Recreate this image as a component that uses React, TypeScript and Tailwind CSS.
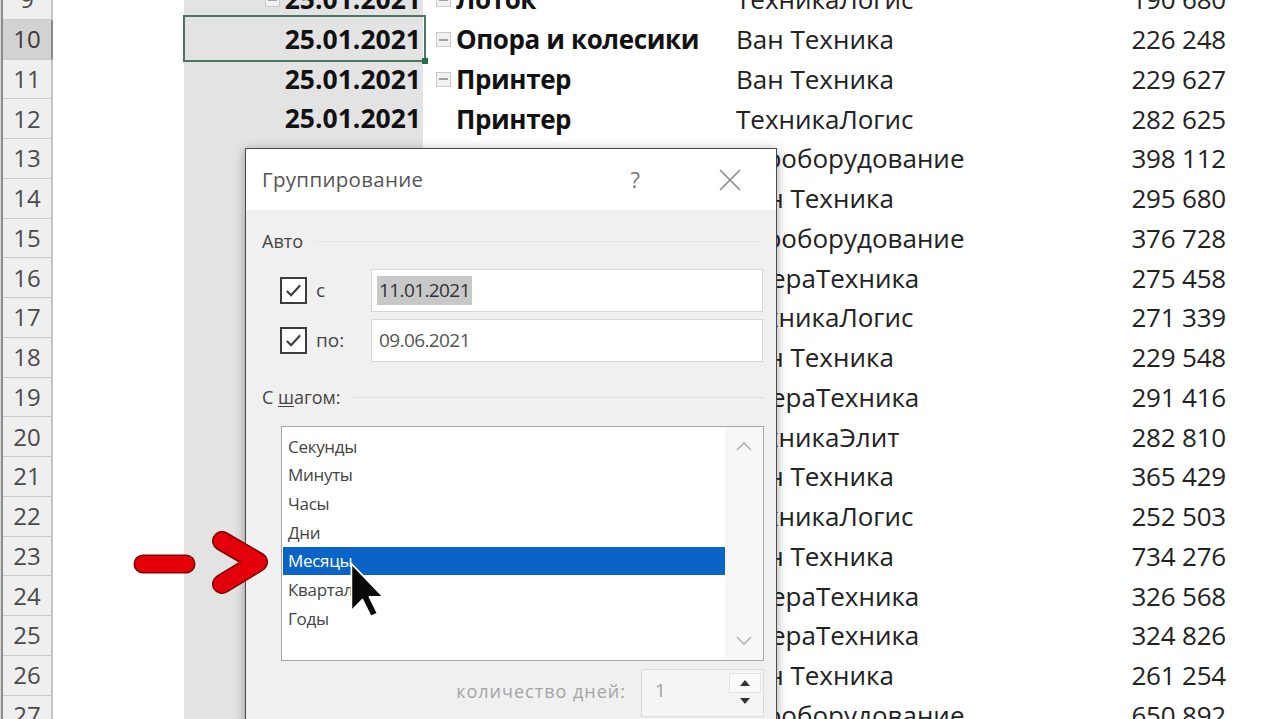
import React from 'react';

type Row = {
  n: number;
  date: string;
  dateToggle?: boolean;
  product: string;
  productToggle?: boolean;
  supplier: string;
  amount: string;
};

const rows: Row[] = [
  { n: 9, date: '25.01.2021', dateToggle: true, product: 'Лоток', productToggle: true, supplier: 'ТехникаЛогис', amount: '190 680' },
  { n: 10, date: '25.01.2021', product: 'Опора и колесики', productToggle: true, supplier: 'Ван Техника', amount: '226 248' },
  { n: 11, date: '25.01.2021', product: 'Принтер', productToggle: true, supplier: 'Ван Техника', amount: '229 627' },
  { n: 12, date: '25.01.2021', product: 'Принтер', supplier: 'ТехникаЛогис', amount: '282 625' },
  { n: 13, date: '26.01.2021', product: 'Принтер', productToggle: true, supplier: 'Евроборудование', amount: '398 112' },
  { n: 14, date: '26.01.2021', product: 'Принтер', supplier: 'Ван Техника', amount: '295 680' },
  { n: 15, date: '28.01.2021', product: 'Сканер', productToggle: true, supplier: 'Евроборудование', amount: '376 728' },
  { n: 16, date: '29.01.2021', product: 'Монитор', productToggle: true, supplier: 'СфераТехника', amount: '275 458' },
  { n: 17, date: '01.02.2021', product: 'Монитор', supplier: 'ТехникаЛогис', amount: '271 339' },
  { n: 18, date: '02.02.2021', product: 'Лоток', productToggle: true, supplier: 'Ван Техника', amount: '229 548' },
  { n: 19, date: '03.02.2021', product: 'Принтер', productToggle: true, supplier: 'СфераТехника', amount: '291 416' },
  { n: 20, date: '04.02.2021', product: 'Сканер', productToggle: true, supplier: 'ТехникаЭлит', amount: '282 810' },
  { n: 21, date: '05.02.2021', product: 'Монитор', productToggle: true, supplier: 'Ван Техника', amount: '365 429' },
  { n: 22, date: '08.02.2021', product: 'Принтер', productToggle: true, supplier: 'ТехникаЛогис', amount: '252 503' },
  { n: 23, date: '09.02.2021', product: 'Сканер', productToggle: true, supplier: 'Ван Техника', amount: '734 276' },
  { n: 24, date: '10.02.2021', product: 'Лоток', productToggle: true, supplier: 'СфераТехника', amount: '326 568' },
  { n: 25, date: '11.02.2021', product: 'Монитор', productToggle: true, supplier: 'СфераТехника', amount: '324 826' },
  { n: 26, date: '12.02.2021', product: 'Принтер', productToggle: true, supplier: 'Ван Техника', amount: '261 254' },
  { n: 27, date: '15.02.2021', product: 'Сканер', productToggle: true, supplier: 'Евроборудование', amount: '650 892' },
];

const units = ['Секунды', 'Минуты', 'Часы', 'Дни', 'Месяцы', 'Кварталы', 'Годы'];

const Toggle = () => (
  <span className="mr-[5px] inline-flex h-[15px] w-[15px] shrink-0 items-center justify-center border border-[#c9c9c9] bg-[#f1f1f1]">
    <span className="h-[2px] w-[9px] bg-[#a0a0a0]" />
  </span>
);

const SheetRow = ({ row }: { row: Row }) => {
  const active = row.n === 10;
  return (
    <div className="flex h-[39.75px] items-stretch">
      <div className="w-[3px] bg-[#d9d9d9] border-r-2 border-[#8c8c8c]" />
      <div
        className={`flex w-[50px] items-center justify-center border-b border-r-2 border-b-[#cacaca] text-[24px] ${
          active ? 'bg-[#d2d2d2] border-r-[#8a8a8a] text-[#3a3a3a]' : 'bg-[#efefef] border-r-[#c4c4c4] text-[#4a4a4a]'
        }`}
      >
        {row.n}
      </div>
      <div className="w-[131px] bg-white" />
      <div className="relative flex w-[239px] items-center justify-end bg-[#e3e3e3] pr-[2px] text-[26.5px] font-bold text-[#111]">
        {row.dateToggle && <Toggle />}
        {row.date}
        {active && (
          <span className="absolute left-[-1px] right-[-3px] top-[-5px] bottom-[-2px] z-10 border-2 border-[#4f7462]">
            <span className="absolute right-[-4px] bottom-[-4px] h-[6px] w-[6px] bg-[#21704a]" />
          </span>
        )}
      </div>
      <div className="flex w-[313px] items-center pl-[13px] text-[26px] font-bold tracking-[-0.4px] text-[#111]">
        {row.productToggle ? <Toggle /> : <span className="w-[20px]" />}
        {row.product}
      </div>
      <div className="flex w-[360px] items-center text-[26px] text-[#222]">{row.supplier}</div>
      <div className="flex w-[130px] items-center justify-end text-[26px] text-[#222] tracking-[-0.2px]">{row.amount}</div>
      <div className="flex-1" />
    </div>
  );
};

const Checkbox = () => (
  <span className="flex h-[27px] w-[27px] items-center justify-center border-2 border-[#3c3c3c] bg-white">
    <svg viewBox="0 0 20 20" className="h-[19px] w-[19px]">
      <path d="M3 10.5 L7.5 15 L17 4.5" fill="none" stroke="#3c3c3c" strokeWidth="2.2" />
    </svg>
  </span>
);

const DateField = ({ label, value, selected }: { label: string; value: string; selected?: boolean }) => (
  <div className="mt-[7px] flex h-[43px] items-center first:mt-[18px]">
    <div className="ml-[34px] flex w-[91px] items-center">
      <Checkbox />
      <span className="ml-[9px] text-[19px] text-[#444]">{label}</span>
    </div>
    <div className="flex h-full w-[392px] items-center border border-[#d6d6d6] bg-white pl-[5px] text-[19px] tracking-[-0.6px]">
      <span className={selected ? 'bg-[#c8c8c8] px-[2px] text-[#333]' : 'px-[2px] text-[#555]'}>{value}</span>
    </div>
  </div>
);

const GroupingDialog = () => (
  <div className="absolute left-[245px] top-[148px] z-20 h-[620px] w-[532px] border border-[#4a4a4a] bg-[#f0f0f0] shadow-[0_2px_10px_rgba(0,0,0,0.35)] font-['Open_Sans',sans-serif]">
    <div className="flex h-[61px] items-center bg-white pl-[16px]">
      <span className="text-[20.5px] tracking-[0.3px] text-[#555]">Группирование</span>
      <span className="ml-auto text-[22px] text-[#777]">?</span>
      <svg viewBox="0 0 24 24" className="ml-[78px] mr-[34px] h-[24px] w-[24px]">
        <path d="M2 2 L22 22 M22 2 L2 22" stroke="#8a8a8a" strokeWidth="1.6" />
      </svg>
    </div>

    <div className="mt-[21px] flex h-[20px] items-center pl-[16px] pr-[12px]">
      <span className="text-[18px] text-[#444]">Авто</span>
      <span className="ml-[12px] h-px flex-1 bg-[#e6e6e6]" />
    </div>

    <div className="flex flex-col">
      <DateField label="с" value="11.01.2021" selected />
      <DateField label="по:" value="09.06.2021" />
    </div>

    <div className="mt-[25px] flex h-[20px] items-center pl-[16px] pr-[12px]">
      <span className="text-[18px] text-[#444]">
        С <span className="underline underline-offset-2">ш</span>агом:
      </span>
      <span className="ml-[12px] h-px flex-1 bg-[#dedede]" />
    </div>

    <div className="ml-[35px] mt-[19px] flex h-[235px] w-[483px] border border-[#a6a6a6] bg-white">
      <ul className="flex-1 pl-px pt-[5px]">
        {units.map((u) => (
          <li
            key={u}
            className={`flex h-[28.7px] items-center pl-[5px] text-[17px] tracking-[-0.3px] ${
              u === 'Месяцы' ? 'bg-[#0a64c8] text-white' : 'text-[#444]'
            }`}
          >
            {u}
          </li>
        ))}
      </ul>
      <div className="flex w-[38px] flex-col items-center justify-between bg-[#f7f7f7] py-[14px]">
        <svg viewBox="0 0 16 10" className="h-[10px] w-[16px]">
          <path d="M1 9 L8 2 L15 9" fill="none" stroke="#b4b4b4" strokeWidth="1.6" />
        </svg>
        <svg viewBox="0 0 16 10" className="h-[10px] w-[16px]">
          <path d="M1 1 L8 8 L15 1" fill="none" stroke="#b4b4b4" strokeWidth="1.6" />
        </svg>
      </div>
    </div>

    <div className="mt-[8px] flex items-start justify-end pr-[12px]">
      <span className="mr-[15px] mt-[9px] text-[18px] tracking-[1px] text-[#a4a4a4]">количество дней:</span>
      <div className="flex h-[48px] w-[123px] border border-[#dadada] bg-[#f5f5f5]">
        <span className="flex-1 pl-[13px] pt-[6px] text-[19px] text-[#a0a0a0]">1</span>
        <div className="flex w-[36px] flex-col items-center">
          <span className="mt-[3px] flex h-[20px] w-[32px] items-center justify-center border border-[#e2e2e2] bg-[#fafafa]">
            <svg viewBox="0 0 10 6" className="h-[6px] w-[10px]">
              <path d="M0 6 L5 0 L10 6 Z" fill="#333" />
            </svg>
          </span>
          <span className="flex h-[16px] w-[32px] items-center justify-center">
            <svg viewBox="0 0 10 6" className="h-[6px] w-[10px]">
              <path d="M0 0 L5 6 L10 0 Z" fill="#333" />
            </svg>
          </span>
        </div>
      </div>
    </div>
  </div>
);

const PointerArrow = () => (
  <svg className="absolute left-[128px] top-[525px] z-30 h-[76px] w-[148px]" viewBox="128 525 148 76">
    <g fill="none" strokeLinecap="round" strokeLinejoin="round">
      <path d="M143 564 L186 564" stroke="#7a0000" strokeWidth="19" />
      <path d="M143 564 L186 564" stroke="#e4000a" strokeWidth="16" />
      <path d="M222 541 L258 562 L222 584" stroke="#7a0000" strokeWidth="20" />
      <path d="M222 541 L258 562 L222 584" stroke="#e4000a" strokeWidth="17" />
    </g>
  </svg>
);

const MouseCursor = () => (
  <svg className="absolute left-[350px] top-[562px] z-30 h-[56px] w-[36px]" viewBox="-0.5 -0.5 13 20">
    <path d="M0 0 L0 17 L4 13 L7 19 L9.5 18 L6.5 12 L11.5 12 Z" fill="#0a0a0a" stroke="#fff" strokeWidth="0.6" strokeLinejoin="round" />
  </svg>
);

export default function App() {
  return (
    <div className="relative h-[719px] w-[1280px] overflow-hidden bg-white font-['Open_Sans',sans-serif]">
      <div className="-mt-[20px]">
        {rows.map((r) => (
          <SheetRow key={r.n} row={r} />
        ))}
      </div>
      <GroupingDialog />
      <PointerArrow />
      <MouseCursor />
    </div>
  );
}
